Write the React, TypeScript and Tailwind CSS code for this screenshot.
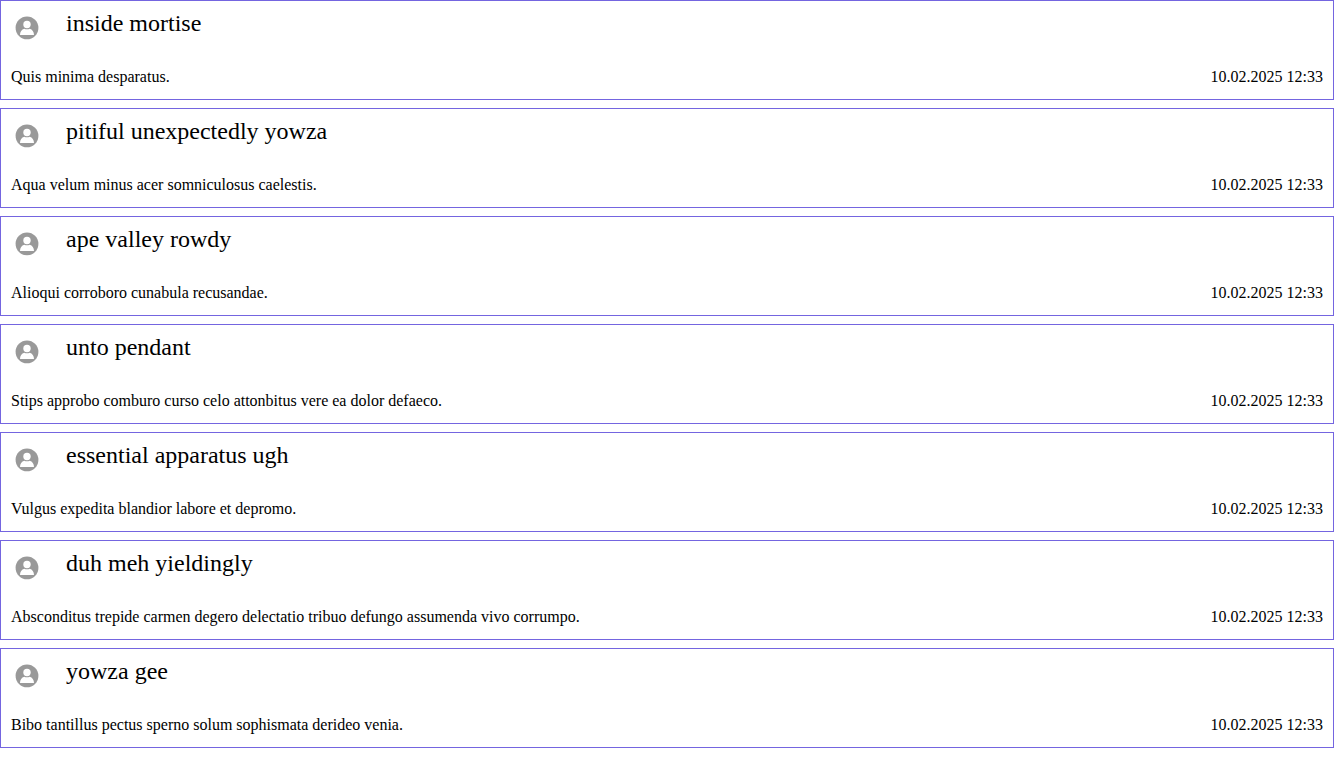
const messages = [
  { name: 'inside mortise', text: 'Quis minima desparatus.' },
  { name: 'pitiful unexpectedly yowza', text: 'Aqua velum minus acer somniculosus caelestis.' },
  { name: 'ape valley rowdy', text: 'Alioqui corroboro cunabula recusandae.' },
  { name: 'unto pendant', text: 'Stips approbo comburo curso celo attonbitus vere ea dolor defaeco.' },
  { name: 'essential apparatus ugh', text: 'Vulgus expedita blandior labore et depromo.' },
  { name: 'duh meh yieldingly', text: 'Absconditus trepide carmen degero delectatio tribuo defungo assumenda vivo corrumpo.' },
  { name: 'yowza gee', text: 'Bibo tantillus pectus sperno solum sophismata derideo venia.' },
];

function Avatar() {
  return (
    <svg className="mt-px size-8" viewBox="0 0 32 32" aria-hidden="true">
      <circle cx="16" cy="15.9" r="11.4" fill="#999" />
      <circle cx="16" cy="12.5" r="3.7" fill="#fff" />
      <path d="M9 23c0-3.3 1.700-5.600 4.300-6.300 1.700.8 3.700.8 5.400 0C21.300 17.400 23 19.700 23 23z" fill="#fff" />
    </svg>
  );
}

export default function App() {
  return (
    <main className="flex flex-col gap-2 bg-white font-['Liberation_Serif',serif] text-base text-black">
      {messages.map((m) => (
        <article key={m.name} className="flex h-[100px] flex-col justify-between border border-[#7465e0] px-2.5 pt-2.5 pb-3">
          <header className="flex gap-[23px]">
            <Avatar />
            <h2 className="-mt-1 text-2xl leading-[32px]">{m.name}</h2>
          </header>
          <div className="flex justify-between leading-[20px]">
            <p>{m.text}</p>
            <time>10.02.2025 12:33</time>
          </div>
        </article>
      ))}
    </main>
  );
}
